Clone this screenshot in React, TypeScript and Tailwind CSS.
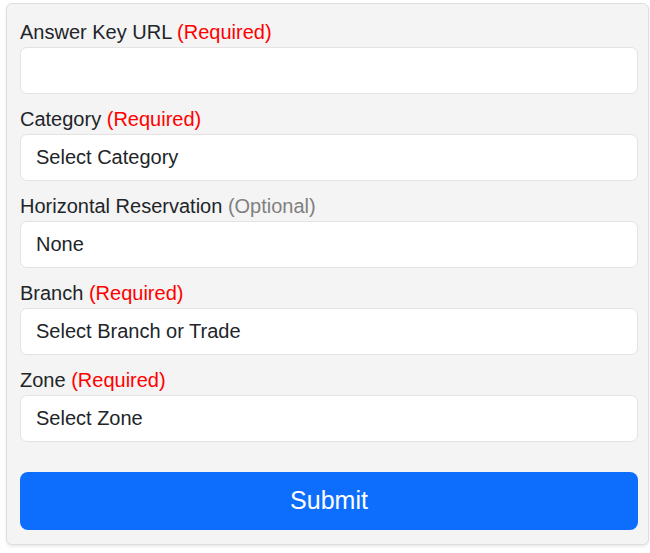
function Field({
  label,
  note,
  optional,
  value,
}: {
  label: string;
  note: string;
  optional?: boolean;
  value: string;
}) {
  return (
    <div className="mb-[12px]">
      <label className="block mb-[1px] text-[20px] leading-[27px] text-[#212529]">
        {label}{" "}
        <span className={optional ? "text-[#808080]" : "text-[#ff0000]"}>{note}</span>
      </label>
      <div className="h-[47px] flex items-center px-[15px] pb-[2px] bg-white border border-[#e3e3e3] rounded-[7px] text-[20px] text-[#212529]">
        {value}
      </div>
    </div>
  );
}

export default function App() {
  return (
    <div className="w-[650px] h-[553px] bg-white" style={{ fontFamily: '"Liberation Sans", Arial, sans-serif' }}>
      <div className="ml-[6px] mt-[3px] w-[643px] h-[542px] bg-[#f4f4f4] border border-[#dedede] rounded-[6px] shadow-[0_2px_3px_rgba(0,0,0,0.08)] pl-[13px] pr-[10px] pt-[15px]">
        <Field label="Answer Key URL" note="(Required)" value="" />
        <Field label="Category" note="(Required)" value="Select Category" />
        <Field label="Horizontal Reservation" note="(Optional)" optional value="None" />
        <Field label="Branch" note="(Required)" value="Select Branch or Trade" />
        <Field label="Zone" note="(Required)" value="Select Zone" />
        <button className="mt-[18px] w-full h-[58px] bg-[#0d6efd] rounded-[8px] text-white text-[25px]">
          Submit
        </button>
      </div>
    </div>
  );
}
